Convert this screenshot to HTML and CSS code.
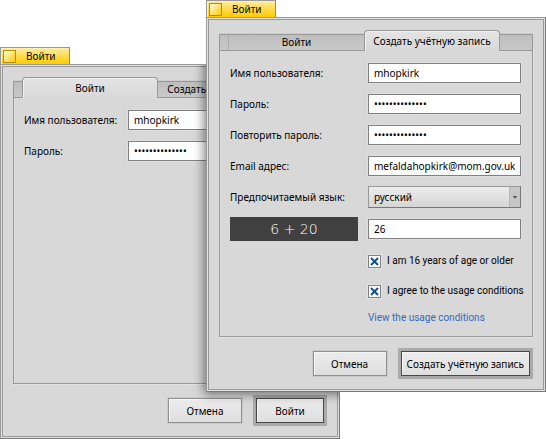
FILE: index.html
```html
<!DOCTYPE html>
<html lang="ru">
<head>
<meta charset="utf-8">
<title>Войти</title>
<link rel="stylesheet" href="styles.css">
</head>
<body>
<main class="desktop">
  <section class="window window-back">
    <header class="title"><button class="close" aria-label="Закрыть"></button><span>Войти</span></header>
    <form class="frame">
      <div class="content">
        <div class="tabs">
          <button type="button" class="tab selected">Войти</button>
          <button type="button" class="tab">Создать учётную запись</button>
        </div>
        <div class="panel">
          <div class="fields narrow">
            <label for="login-name">Имя пользователя:</label>
            <input class="text" id="login-name" type="text" value="mhopkirk">
            <label for="login-pass">Пароль:</label>
            <input class="text" id="login-pass" type="password" value="12345678901234">
          </div>
        </div>
        <footer class="actions">
          <button type="button" class="button">Отмена</button>
          <button type="button" class="button default">Войти</button>
        </footer>
      </div>
      <div class="shade"></div>
    </form>
  </section>

  <section class="window window-front">
    <header class="title"><button class="close" aria-label="Закрыть"></button><span>Войти</span></header>
    <form class="frame">
      <div class="content">
        <div class="tabs">
          <button type="button" class="tab">Войти</button>
          <button type="button" class="tab selected">Создать учётную запись</button>
        </div>
        <div class="panel">
          <div class="fields">
            <label for="name">Имя пользователя:</label>
            <input class="text" id="name" type="text" value="mhopkirk">
            <label for="pass">Пароль:</label>
            <input class="text" id="pass" type="password" value="12345678901234">
            <label for="repeat">Повторить пароль:</label>
            <input class="text" id="repeat" type="password" value="12345678901234">
            <label for="email">Email адрес:</label>
            <input class="text" id="email" type="email" value="mefaldahopkirk@mom.gov.uk">
            <label for="language">Предпочитаемый язык:</label>
            <div class="menu">
              <select id="language"><option>русский</option></select>
              <svg class="arrow" viewBox="0 0 11 20" aria-hidden="true"><path d="M3 9h5L5.500 12z"/></svg>
            </div>
            <label class="captcha" for="captcha">6 + 20</label>
            <input class="text" id="captcha" type="text" value="26">
            <div class="check">
              <input type="checkbox" id="age" checked>
              <svg class="cross" viewBox="0 0 13 13" aria-hidden="true"><path d="M3 3l7 7M10 3l-7 7"/></svg>
              <label for="age">I am 16 years of age or older</label>
            </div>
            <div class="check">
              <input type="checkbox" id="terms" checked>
              <svg class="cross" viewBox="0 0 13 13" aria-hidden="true"><path d="M3 3l7 7M10 3l-7 7"/></svg>
              <label for="terms">I agree to the usage conditions</label>
            </div>
            <a class="link" href="#conditions">View the usage conditions</a>
          </div>
        </div>
        <footer class="actions">
          <button type="button" class="button">Отмена</button>
          <button type="button" class="button default">Создать учётную запись</button>
        </footer>
      </div>
    </form>
  </section>
</main>
</body>
</html>
```
FILE: styles.css
```css
* { box-sizing: border-box; }

body {
  margin: 0;
  background: #fff;
  color: #000;
  font: 10px/16px "Noto Sans", sans-serif;
}

button, input, select { font: inherit; color: inherit; margin: 0; }

.desktop { position: relative; min-height: 100vh; overflow: hidden; }

.window { position: absolute; }
.window-back { left: 0; right: 206px; top: 47px; }
.window-front { left: 206px; right: 0; top: 0; }

/* Yellow title tab */
.title {
  display: flex;
  align-items: center;
  gap: 10px;
  width: 70px;
  height: 17px;
  padding: 0 0 0 2px;
  border: 1px solid #999;
  border-right-color: #a88d22;
  border-bottom: 0;
  background: linear-gradient(#ffec9f, #ffcb00);
  box-shadow: inset 1px 1px #fff0b0;
  white-space: nowrap;
}
.close {
  flex: none;
  width: 13px;
  height: 13px;
  padding: 0;
  border: 1px solid #b38e00;
  background: linear-gradient(135deg, #fffbe0, #ffcb00);
}

/* Window frame: outer line, light gap, inner line */
.frame {
  position: relative;
  overflow: hidden;
  padding: 1px;
  border: 1px solid #999;
  border-right-color: #777;
  border-bottom-color: #777;
  background: #e2e2e2;
}
.content {
  padding: 14px 10px 10px;
  border: 1px solid #999;
  background: #d8d8d8;
}

/* Shadow that the front window casts on this one */
.shade {
  position: absolute;
  left: 205px;
  right: -206px;
  top: -48px;
  bottom: 46px;
  box-shadow: 0 0 10px 2px rgba(0, 0, 0, .5);
}

.tabs {
  display: flex;
  align-items: flex-end;
  height: 16px;
  padding-left: 8px;
  border: 1px solid #999;
  border-bottom: 0;
  background: linear-gradient(#bebebe, #c8c8c8);
  box-shadow: 0 -1px #cdcdcd;
}
.tab {
  flex: 0 0 136px;
  height: 15px;
  padding: 0;
  border: 0;
  border-left: 1px solid #aaa;
  background: transparent;
  line-height: 15px;
  white-space: nowrap;
}
.tab.selected {
  z-index: 1;
  height: 21px;
  margin-bottom: -1px;
  border: 1px solid #999;
  border-bottom: 0;
  border-radius: 4px 4px 0 0;
  background: linear-gradient(#e4e4e4, #d8d8d8);
  box-shadow: inset 1px 1px #f0f0f0;
  line-height: 20px;
}
.tab.selected + .tab { border-left: 0; }

.panel {
  min-height: 287px;
  padding: 11px 11px 9px 10px;
  border: 1px solid #999;
  box-shadow: inset 1px 0 #e0e0e0, 0 1px #e4e4e4, 1px 0 #e4e4e4;
}
.fields {
  display: grid;
  grid-template-columns: 128px minmax(0, 1fr);
  gap: 9px 10px;
  align-items: center;
}
.fields.narrow { grid-template-columns: 94px minmax(0, 1fr); }
.fields label { line-height: 22px; white-space: nowrap; }

.text {
  width: 100%;
  height: 20px;
  padding: 0 5px;
  border: 1px solid #808080;
  border-radius: 0;
  outline: 1px solid #e0e0e0;
  background: #fff;
}

.menu { display: grid; }
.menu select, .arrow { grid-area: 1 / 1; }
.menu select {
  appearance: none;
  height: 22px;
  padding: 0 16px 0 5px;
  border: 1px solid #999;
  border-right-color: #777;
  border-bottom-color: #777;
  border-radius: 0;
  background: linear-gradient(#ececec, #d6d6d6);
}
.arrow {
  justify-self: end;
  align-self: center;
  width: 11px;
  height: 20px;
  margin-right: 1px;
  border-left: 1px solid #b8b8b8;
  background: #c6c6c6;
  fill: #555;
  pointer-events: none;
}

.fields .captcha {
  height: 24px;
  background: #404040;
  color: #fff;
  font: 200 14px/24px "DejaVu Sans", sans-serif;
  text-align: center;
}

.check {
  grid-column: 2;
  display: grid;
  grid-template-columns: 13px 1fr;
  align-items: center;
  gap: 6px;
  height: 21px;
}
.check input, .cross { grid-area: 1 / 1; width: 13px; height: 13px; }
.check input {
  appearance: none;
  border: 1px solid #808080;
  outline: 1px solid #e4e4e4;
  background: #fff;
}
.cross { visibility: hidden; fill: none; stroke: #164f88; stroke-width: 2; pointer-events: none; }
.check input:checked + .cross { visibility: visible; }
.check label, .link { font-family: Roboto, "Noto Sans", sans-serif; }
.link {
  grid-column: 2;
  color: #336abf;
  text-decoration: none;
  white-space: nowrap;
}

.actions {
  display: flex;
  align-items: center;
  justify-content: flex-end;
  gap: 11px;
  height: 31px;
  margin-top: 11px;
}
.button {
  min-width: 74px;
  height: 25px;
  padding: 0 5px;
  border: 1px solid #909090;
  outline: 1px solid #cacaca;
  background: linear-gradient(#ececec, #e6e6e6 50%, #dedede);
  box-shadow: inset 1px 1px #f6f6f6;
  white-space: nowrap;
}
.button.default {
  min-width: 68px;
  margin: 3px;
  border-color: #484848;
  outline: 3px solid #aaa;
}
```
